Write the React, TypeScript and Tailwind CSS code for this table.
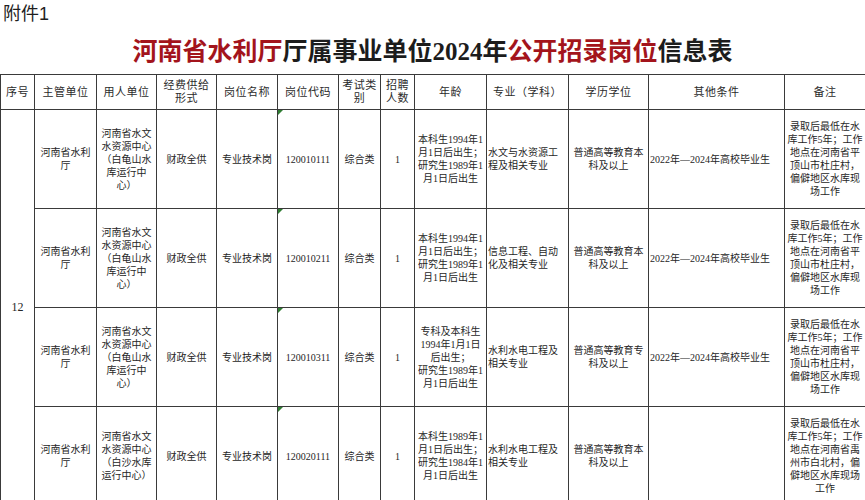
import React from 'react'

type Row = {
  unit: string[]
  employer: string[]
  code: string
  age: string[]
  major: string[]
  edu: string[]
  other: string
  note: string[]
}

const ROWS: Row[] = [
  {
    unit: ['河南省水利', '厅'],
    employer: ['河南省水文', '水资源中心', '（白龟山水', '库运行中', '心）'],
    code: '120010111',
    age: ['本科生1994年1', '月1日后出生；', '研究生1989年1', '月1日后出生'],
    major: ['水文与水资源工', '程及相关专业'],
    edu: ['普通高等教育本', '科及以上'],
    other: '2022年—2024年高校毕业生',
    note: ['录取后最低在水', '库工作5年；工作', '地点在河南省平', '顶山市杜庄村，', '偏僻地区水库现', '场工作'],
  },
  {
    unit: ['河南省水利', '厅'],
    employer: ['河南省水文', '水资源中心', '（白龟山水', '库运行中', '心）'],
    code: '120010211',
    age: ['本科生1994年1', '月1日后出生；', '研究生1989年1', '月1日后出生'],
    major: ['信息工程、自动', '化及相关专业'],
    edu: ['普通高等教育本', '科及以上'],
    other: '2022年—2024年高校毕业生',
    note: ['录取后最低在水', '库工作5年；工作', '地点在河南省平', '顶山市杜庄村，', '偏僻地区水库现', '场工作'],
  },
  {
    unit: ['河南省水利', '厅'],
    employer: ['河南省水文', '水资源中心', '（白龟山水', '库运行中', '心）'],
    code: '120010311',
    age: ['专科及本科生', '1994年1月1日', '后出生；', '研究生1989年1', '月1日后出生'],
    major: ['水利水电工程及', '相关专业'],
    edu: ['普通高等教育专', '科及以上'],
    other: '2022年—2024年高校毕业生',
    note: ['录取后最低在水', '库工作5年；工作', '地点在河南省平', '顶山市杜庄村，', '偏僻地区水库现', '场工作'],
  },
  {
    unit: ['河南省水利', '厅'],
    employer: ['河南省水文', '水资源中心', '（白沙水库', '运行中心）'],
    code: '120020111',
    age: ['本科生1989年1', '月1日后出生；', '研究生1984年1', '月1日后出生'],
    major: ['水利水电工程及', '相关专业'],
    edu: ['普通高等教育本', '科及以上'],
    other: '',
    note: ['录取后最低在水', '库工作5年；工作', '地点在河南省禹', '州市白北村，偏', '僻地区水库现场', '工作'],
  },
]

const HEAD: string[][] = [
  ['序号'],
  ['主管单位'],
  ['用人单位'],
  ['经费供给', '形式'],
  ['岗位名称'],
  ['岗位代码'],
  ['考试类', '别'],
  ['招聘', '人数'],
  ['年龄'],
  ['专业（学科）'],
  ['学历学位'],
  ['其他条件'],
  ['备注'],
]

const WIDTHS = [34, 62, 60, 60, 61, 61, 42, 34, 72, 82, 80, 136, 81]

function Lines({ lines }: { lines: string[] }) {
  return (
    <>
      {lines.map((l, i) => (
        <div key={i}>{l}</div>
      ))}
    </>
  )
}

const td = 'border border-[#3a3a3a] px-[1px] align-middle'

export default function App() {
  return (
    <div className="w-[865px] bg-white text-[#262626] font-['Liberation_Serif','Noto_Sans_CJK_SC',serif]">
      {/* Attachment label */}
      <div className="h-[28px] pl-[3px] pt-[2px] text-[18px] leading-[24px] text-[#1f1f1f] font-['Liberation_Sans','Noto_Sans_CJK_SC',sans-serif]">
        附件1
      </div>

      {/* Title */}
      <div className="flex h-[46px] items-center justify-center text-[25px] font-bold leading-none tracking-[0px] text-[#1c1c1c]">
        <span className="text-[#a3141c]">河南省水利厅</span>
        <span>厅属事业单位2024年</span>
        <span className="text-[#a3141c]">公开招录岗位</span>
        <span>信息表</span>
      </div>

      {/* Table */}
      <table className="w-[865px] table-fixed border-collapse text-[10px] leading-[13px]">
        <colgroup>
          {WIDTHS.map((w, i) => (
            <col key={i} style={{ width: w }} />
          ))}
        </colgroup>
        <thead>
          <tr className="h-[35px]">
            {HEAD.map((h, i) => (
              <th
                key={i}
                className={`${td} text-center text-[11px] font-normal leading-[13px] tracking-[0.5px] text-[#2b2b2b]`}
              >
                <Lines lines={h} />
              </th>
            ))}
          </tr>
        </thead>
        <tbody>
          {ROWS.map((r, i) => (
            <tr key={r.code} className="h-[99px]">
              {i === 0 && (
                <td rowSpan={4} className={`${td} text-center text-[12px]`}>
                  12
                </td>
              )}
              <td className={`${td} text-center`}>
                <Lines lines={r.unit} />
              </td>
              <td className={`${td} text-center`}>
                <Lines lines={r.employer} />
              </td>
              <td className={`${td} text-center`}>财政全供</td>
              <td className={`${td} text-center`}>专业技术岗</td>
              <td className={`${td} relative text-center`}>
                <span className="absolute left-0 top-0 h-0 w-0 border-r-[5px] border-t-[5px] border-r-transparent border-t-[#2f7d32]" />
                {r.code}
              </td>
              <td className={`${td} text-center`}>综合类</td>
              <td className={`${td} text-center`}>1</td>
              <td className={`${td} text-center`}>
                <Lines lines={r.age} />
              </td>
              <td className={`${td} text-left`}>
                <Lines lines={r.major} />
              </td>
              <td className={`${td} text-center`}>
                <Lines lines={r.edu} />
              </td>
              <td className={`${td} text-left`}>{r.other}</td>
              <td className={`${td} text-center`}>
                <Lines lines={r.note} />
              </td>
            </tr>
          ))}
        </tbody>
      </table>
    </div>
  )
}
